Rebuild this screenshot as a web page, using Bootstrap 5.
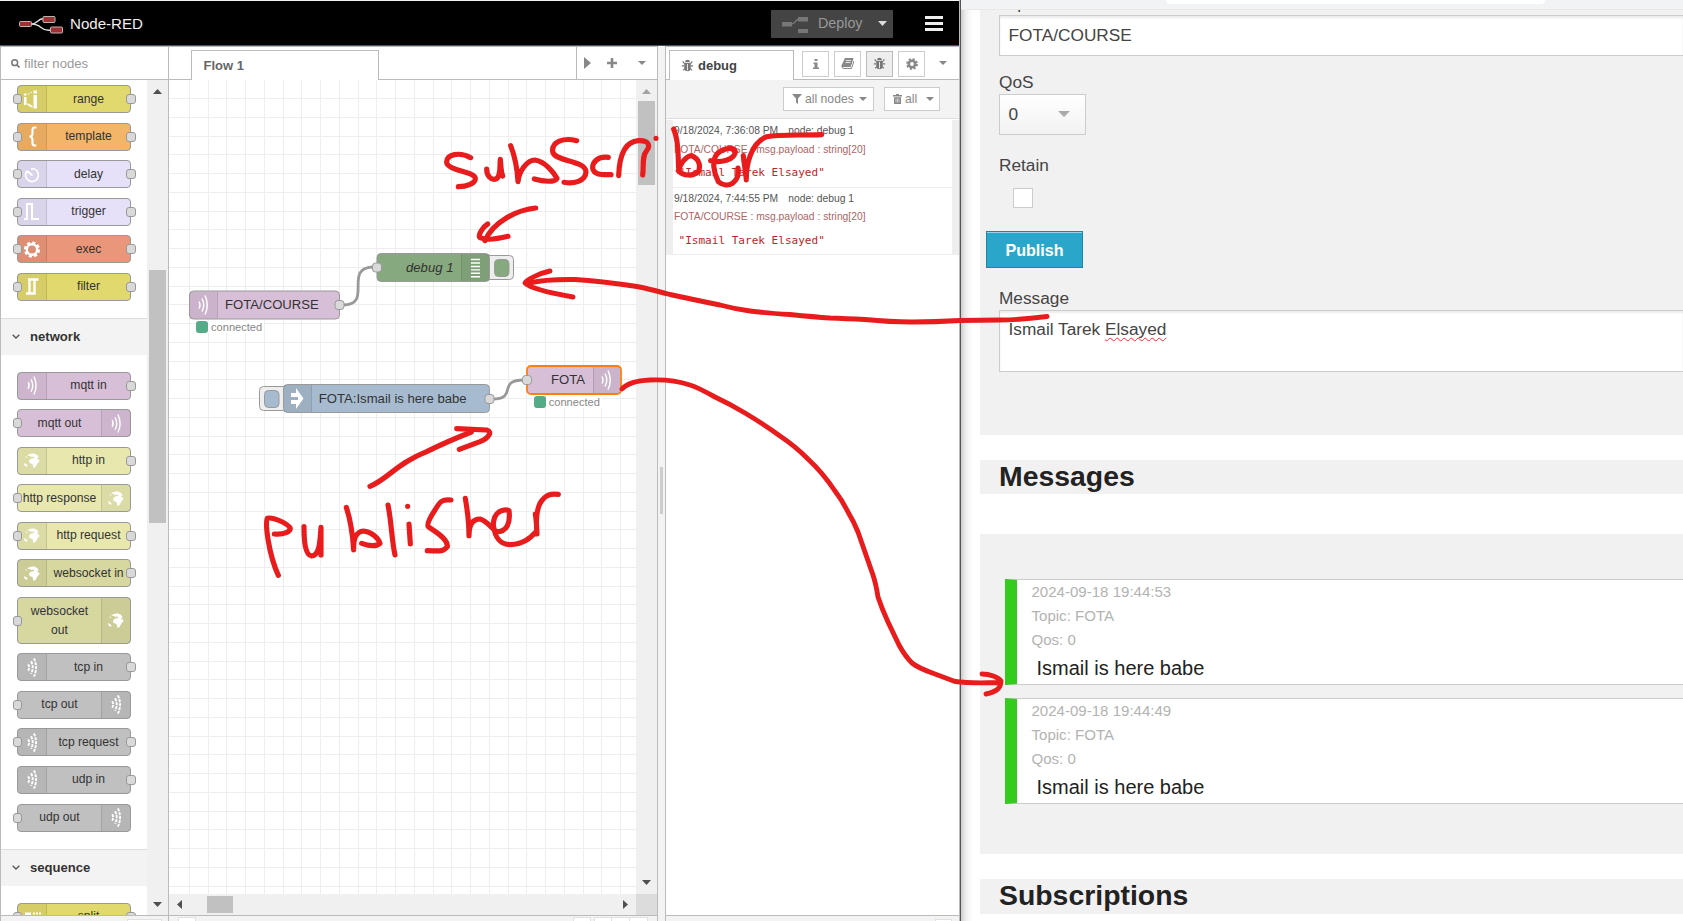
<!DOCTYPE html>
<html lang="en">
<head>
<meta charset="utf-8">
<title>Node-RED</title>
<link href="https://cdn.jsdelivr.net/npm/bootstrap@5.3.0/dist/css/bootstrap.min.css" rel="stylesheet">
<style>
body{width:1683px;height:921px;overflow:hidden;background:#fff;font-family:"Liberation Sans",Arial,sans-serif;color:#333;line-height:1.2}
.desk{width:1683px;height:921px}
.editor{width:960px;border-right:1px solid #bbb;background:#fff}
.strip{height:1px;background:#eef3f7}
.topbar{height:45px;background:#000;border-bottom:1px solid #b52a20;padding-left:19px;padding-right:16px;color:#eee}
.brand{font-size:15.1px;margin-left:7px;padding-top:2px;color:#eee}
.deploy{width:122px;height:28px;background:#444;color:#999;font-size:14.3px;padding-left:10px;margin-top:1px}
.work{height:875px}
.palette{width:169px;border-left:1px solid #bbb;border-right:1px solid #bbb}
.bar-row{height:34px;border-top:1px solid #bbb;border-bottom:1px solid #bbb}
.search{padding-left:10px;font-size:13.1px;color:#999}
.scroll-area{height:835px;overflow:hidden}
.nodes{width:146px;overflow:hidden;padding-top:5px}
.vbar{background:#f0f0f0;width:21px}
.thumb{background:#c1c1c1}
.pnode{width:114px;height:28px;border:1px solid #999;border-radius:4px;margin:0 0 9.55px 16px;font-size:12.15px;color:#333;display:flex;position:relative}
.pnode.tall{height:47px;margin-bottom:9.3px}
.picon{width:29px;background:rgba(0,0,0,.05);border-right:1px solid rgba(0,0,0,.1);display:flex;align-items:center;justify-content:center;flex:none}
.out .picon{order:2;border-right:0;border-left:1px solid rgba(0,0,0,.1)}
.plabel{flex:1;text-align:center;display:flex;align-items:center;justify-content:center;line-height:19px;white-space:nowrap}
.port{position:absolute;width:9px;height:10px;border:1px solid #999;border-radius:3px;background:#d9d9d9;top:50%;margin-top:-5px}
.port.l{left:-5px}.port.r{right:-6px;width:10px}
.cat{height:37px;background:#f3f3f3;border-top:1px solid #ddd;font-weight:bold;font-size:13.1px;padding-left:11px;color:#333}
.foot{height:6px;background:#f3f3f3;border-top:1px solid #bbb}
.flowcol{width:489px;border-right:1px solid #bbb}
.tabx{align-self:flex-end;height:30px;border:1px solid #bbb;border-bottom:0;background:#fff;margin-bottom:-1px;font-weight:bold;font-size:13px;color:#666}
.split{width:7px;background:#f3f3f3}
.side{width:294px;border-left:1px solid #bbb}
.ibtn{width:27px;height:26px;border:1px solid #ccc;background:#fff;margin-right:5px;margin-top:1px}
.dbtn{height:24px;border:1px solid #ccc;background:#fff;font-size:12.2px;color:#888;padding:0 6px 0 8px}
.dtools{height:39px;background:#f3f3f3;border-bottom:1px solid #ddd;padding-right:19px}
.dmsg{border-left:7px solid #eee;border-right:7px solid #eee;border-bottom:1px solid #eee;font-size:10.3px;padding-left:1px;height:67px;color:#555}
.dmsg code{font-family:"DejaVu Sans Mono",monospace;font-size:11.05px;color:#b72828;padding-left:4.500px}
.web{width:723px;background:#fff;color:#444;font-size:17.25px;border-left:1px solid #555}
.webin{padding-left:19px;background:linear-gradient(90deg,#ccc 0,#eaeaea 4px,#f8f8f8 8px,#fff 13px)}
.chrome{height:10px;background:#f1f3f5;border-bottom:1px solid #e6e8ea}
.omni{width:379px;height:4px;background:#fff;border-radius:0 0 8px 8px;margin-left:205px}
.panelx{background:#f1f1f1;padding-left:19px}
.fld{background:#fff;border:1px solid #ccc;border-right:0;box-shadow:inset 0 2px 2px rgba(0,0,0,.08);padding-left:8.500px;color:#444}
.sel{width:87px;height:41px;border:1px solid #ccc;background:linear-gradient(#fff,#f2f2f2);padding:0 15px 0 8.500px}
.pub{width:97px;height:37px;background:#2ba6cb;border:1px solid #1e85a4;box-shadow:inset 0 1px 0 rgba(255,255,255,.5);color:#fff;font-weight:bold;font-size:16.100px;margin-left:-13px;padding-top:2px}
.hd{height:34px;font-size:28.4px;font-weight:bold;color:#222;line-height:33px;white-space:nowrap}
.item{height:106px;margin-left:6px;border:1px solid #ccc;border-right:0;border-left:12px solid #33cc1c;background:#fff;padding-left:14.500px;color:#b3b3b3;font-size:15.05px}
.item div{height:24px;line-height:24px}
.item .body-t{font-size:20px;color:#222;padding-left:5px;height:32px;line-height:32px}
.sq{text-decoration:underline wavy #e33 1px;text-underline-offset:2px;text-decoration-skip-ink:none}
.ink{position:absolute;left:0;top:0;pointer-events:none}
svg{flex:none}
</style>
<script src="https://cdn.jsdelivr.net/npm/bootstrap@5.3.0/dist/js/bootstrap.bundle.min.js"></script>
</head>
<body>
<svg width="0" height="0" class="position-absolute">
<defs>
<symbol id="i-range" viewBox="0 0 20 20"><g fill="#fff"><path d="M2 4h2.500v2H2zM2 7.500h2.500v8H2zM11.500 1h3.500v3h-3.500zM11.500 5.500h3.500v13.500h-3.500zM6 4h1.500v1H6zM8.500 2.500h1.500v1h-1.500zM5.500 13.500l5 3v2l-5-3z"/></g></symbol>
<symbol id="i-template" viewBox="0 0 20 22"><path d="M14.500 1.500h-1.500Q10.500 1.500 10.500 4v4q0 2.500-3 3q3 .5 3 3v4q0 2.500 2.500 2.500H14.500" fill="none" stroke="#fff" stroke-width="2.200"/></symbol>
<symbol id="i-delay" viewBox="0 0 20 20"><path d="M10 4a6.500 6.500 0 1 1-4.900 2.200M10 3.500V5.500M10.500 11L5 6.500" fill="none" stroke="#fff" stroke-width="1.700"/></symbol>
<symbol id="i-trigger" viewBox="0 0 20 20"><path d="M2 17.500H5V2.500H10V17.500H17" fill="none" stroke="#fff" stroke-width="2"/></symbol>
<symbol id="i-exec" viewBox="0 0 20 20"><circle cx="10" cy="10" r="5.200" fill="none" stroke="#fff" stroke-width="2.400"/><circle cx="10" cy="10" r="6.900" fill="none" stroke="#fff" stroke-width="2.400" stroke-dasharray="3.200 2.219"/></symbol>
<symbol id="i-filter" viewBox="0 0 20 20"><path d="M4 17H7.500V3M6 3H16.500M12.500 3V17H6" fill="none" stroke="#fff" stroke-width="2.400"/></symbol>
<symbol id="i-wave" viewBox="0 0 14 22"><path d="M3 7.500Q5 11 3 14.500M6 4.500Q9.500 11 6 17.500M9 1.500Q13.500 11 9 20.500" fill="none" stroke="#fff" stroke-width="1.500"/></symbol>
<symbol id="i-bridge" viewBox="0 0 14 22"><path d="M3 7.500Q5 11 3 14.500M6 4.500Q9.500 11 6 17.500M9 1.500Q13.500 11 9 20.500" fill="none" stroke="#fff" stroke-width="2" stroke-dasharray="3.200 1"/></symbol>
<symbol id="i-globe" viewBox="0 0 20 20"><path d="M5 5Q8 2.500 12 3Q16 4 16.500 7L14.500 8.500L17 9L17.500 11L16 12L13.500 16.500L11.500 17.500L10.500 13.500L7.500 12.500L7 10L9 8L12.500 7.500L11.500 6L9.500 6.500L8 5.500ZM3 6L5.500 6.500L4.500 7.500ZM2 12.500L5.500 14.500L5 16.500L2.500 15Z" fill="#fff"/></symbol>
<symbol id="i-split" viewBox="0 0 20 20"><path d="M3 6h6v8H3zM11 6h2v2h-2zM14 6h2v2h-2zM17 6h2v2h-2z" fill="#fff"/></symbol>
<symbol id="i-bug" viewBox="0 0 16 16"><path d="M5 4a3 3 0 0 1 6 0zM4 5h8v6a4 4 0 0 1-8 0z" fill="#777"/><path d="M8 6v8" stroke="#fff" stroke-width="1"/><path d="M2 3l2.500 3M14 3l-2.500 3M1 8.500h3M15 8.500h-3M2.500 14L5 11.500M13.500 14L11 11.500" stroke="#777" stroke-width="1.400"/></symbol>
</defs>
</svg>
<div class="desk d-flex position-relative">
<div class="editor d-flex flex-column flex-shrink-0">
 <div class="strip"></div>
 <header class="topbar d-flex align-items-center">
  <svg width="44" height="18" viewBox="0 0 44 18" style="margin-top:3px"><path d="M12 8Q16 8 19 5T26 3M12 8Q18 8 22 11.500T32 14" fill="none" stroke="#ddd" stroke-width="1.400"/><g fill="#a03034" stroke="#c4b0b0" stroke-width="1"><rect x=".5" y="5.500" width="12" height="5" rx="1"/><rect x="24" y=".5" width="12" height="6" rx="1"/><rect x="31.500" y="11" width="12" height="6" rx="1"/></g></svg>
  <span class="brand">Node-RED</span>
  <div class="deploy d-flex align-items-center ms-auto"><svg width="28" height="18" viewBox="0 0 28 18"><path d="M1 7h10v4.500H1zM17 2h10v4.500H17zM17 14h10v4.500H17z" fill="#777"/><path d="M10 9Q13 9 14 7T18 4" stroke="#777" fill="none" stroke-width="1.500"/></svg><span style="margin-left:9px">Deploy</span><svg width="9" height="5" class="ms-auto" viewBox="0 0 9 5" style="margin-right:6px"><path d="M0 0h9L4.500 5z" fill="#ddd"/></svg></div>
  <svg width="18" height="15" viewBox="0 0 18 15" style="margin-left:32px"><path d="M0 1.500h18M0 7.500h18M0 13.500h18" stroke="#eee" stroke-width="2.800"/></svg>
 </header>
 <div class="work d-flex">
  <section class="palette d-flex flex-column flex-shrink-0">
   <div class="bar-row search d-flex align-items-center"><svg width="9" height="9" viewBox="0 0 9 9"><circle cx="3.700" cy="3.700" r="2.900" fill="none" stroke="#777" stroke-width="1.500"/><path d="M6 6L8.500 8.500" stroke="#777" stroke-width="1.700"/></svg><span class="ms-1" style="padding-top:1px">filter nodes</span></div>
   <div class="scroll-area d-flex">
    <div class="nodes" id="nodes"></div>
    <div class="vbar d-flex flex-column align-items-center">
     <svg width="9" height="5" viewBox="0 0 9 5" style="margin-top:9px"><path d="M0 5h9L4.500 0z" fill="#505050"/></svg>
     <div class="thumb" style="width:17px;height:253px;margin-top:176px"></div>
     <svg width="9" height="5" viewBox="0 0 9 5" class="mt-auto" style="margin-bottom:8px"><path d="M0 0h9L4.500 5z" fill="#505050"/></svg>
    </div>
   </div>
   <div class="foot d-flex"><div class="border bg-white" style="width:35px;height:8px;margin:3px 0 0 126px"></div></div>
  </section>
  <section class="flowcol d-flex flex-column flex-shrink-0">
   <div class="bar-row d-flex">
    <div class="tabx d-flex align-items-center" style="width:188px;margin-left:22px;padding-left:11.500px">Flow 1</div>
    <div class="ms-auto d-flex align-items-center" style="width:81px;border-left:1px solid #bbb;padding-left:7px">
     <svg width="7" height="12" viewBox="0 0 7 12"><path d="M0 0v12L7 6z" fill="#888"/></svg>
     <svg width="10" height="10" viewBox="0 0 10 10" style="margin-left:16px"><path d="M5 0v10M0 5h10" stroke="#888" stroke-width="2.600"/></svg>
     <svg width="8" height="4" viewBox="0 0 8 4" style="margin-left:21px"><path d="M0 0h8L4 4z" fill="#888"/></svg>
    </div>
   </div>
   <div class="d-flex" style="height:814px">
    <svg id="flow" width="467" height="814" viewBox="169 80 467 814">
     <g id="grid" fill="#eee"></g>
     <g fill="none" stroke="#999" stroke-width="2.800"><path d="M343 305C374 305 342 267 374 267M492 399C519 399 496 380 524 380"/></g>
     <g stroke="#999" stroke-width="1"><rect x="485" y="255.500" width="28.500" height="24" rx="4" fill="#eee"/><rect x="494.500" y="259.500" width="14.500" height="17" rx="4" fill="#87a980"/><rect x="259.500" y="386.500" width="28" height="24" rx="4" fill="#eee"/><rect x="264.500" y="390.500" width="14.500" height="17" rx="4" fill="#a6bbcf"/>
     <rect x="189.500" y="291" width="150" height="28" rx="4" fill="#d8bfd8"/><rect x="377" y="253.500" width="112.500" height="28" rx="4" fill="#87a980"/><rect x="283.500" y="384.500" width="206" height="28" rx="4" fill="#a6bbcf"/><rect x="527" y="366" width="94" height="28" rx="4" fill="#d8bfd8" stroke="#ff7f0e" stroke-width="1.800"/></g>
     <path d="M190 292h27.500v26.500H190zM461.500 254h27.500v27H461.500zM284 385h27.500v27H284zM593 367h27v26H593z" fill="#000" fill-opacity=".06"/>
     <path d="M217.500 292v26M461.500 254v27M311.500 385v27M593.500 367v26" stroke="#000" stroke-opacity=".12"/>
     <use href="#i-wave" x="196" y="294" width="14" height="22"/><use href="#i-wave" x="599" y="369" width="14" height="22"/>
     <path d="M471 259.500h9M471 263h9M471 266.500h9M471 269.900h9M471 273.300h9M471 276.700h9" stroke="#fff" stroke-width="1.400"/>
     <path d="M291 393h5v-5l7.500 10.500l-7.500 10.500v-5h-5v-4h7v-3h-7z" fill="#fff"/>
     <g fill="#d9d9d9" stroke="#999"><rect x="335" y="300.500" width="9" height="9" rx="3"/><rect x="372.500" y="263" width="9" height="9" rx="3"/><rect x="485" y="394.500" width="9" height="9" rx="3"/><rect x="522.500" y="375.500" width="9" height="9" rx="3"/></g>
     <path d="M208 321h56v12h-56zM546 396h56v12h-56z" fill="#fff"/>
     <g fill="#5a8"><rect x="196" y="321" width="12" height="12" rx="3"/><rect x="534" y="396" width="12" height="12" rx="3"/></g>
     <g fill="#333" font-size="13.130"><text x="225" y="309">FOTA/COURSE</text><text x="406" y="272" font-style="italic">debug 1</text><text x="318.800" y="403">FOTA:Ismail is here babe</text><text x="551" y="384">FOTA</text></g>
     <g fill="#888" font-size="11.100"><text x="211" y="331">connected</text><text x="548.700" y="406">connected</text></g>
    </svg>
    <div class="vbar d-flex flex-column align-items-center"><svg width="9" height="5" viewBox="0 0 9 5" style="margin-top:9px"><path d="M0 5h9L4.500 0z" fill="#a3a3a3"/></svg><div class="thumb" style="width:17px;height:84px;margin-top:7px"></div><svg width="9" height="5" viewBox="0 0 9 5" class="mt-auto" style="margin-bottom:9px"><path d="M0 0h9L4.500 5z" fill="#505050"/></svg></div>
   </div>
   <div class="d-flex align-items-center" style="height:21px;background:#f0f0f0"><svg width="5" height="9" viewBox="0 0 5 9" style="margin-left:8px"><path d="M5 0v9L0 4.500z" fill="#505050"/></svg><div class="thumb" style="width:26px;height:17px;margin-left:25px"></div><svg width="5" height="9" viewBox="0 0 5 9" class="ms-auto" style="margin-right:8px"><path d="M0 0v9L5 4.500z" fill="#505050"/></svg><div style="width:21px;height:21px;background:#dcdcdc"></div></div>
   <div class="foot d-flex"><div class="border bg-white" style="width:18px;height:8px;margin:1px 0 0 9px"></div><div class="border bg-white ms-auto" style="width:18px;height:8px;margin-top:1px"></div><div class="border bg-white d-flex" style="width:54px;height:8px;margin:1px 9px 0 3px"><div class="border-end" style="width:17px"></div><div class="border-end" style="width:18px"></div></div></div>
  </section>
  <div class="split d-flex align-items-center justify-content-center flex-shrink-0"><div style="width:3px;height:47px;background:#ccc;margin-top:14px"></div></div>
  <section class="side d-flex flex-column flex-shrink-0">
   <div class="bar-row d-flex">
    <div class="tabx d-flex align-items-center" style="width:125px;margin-left:3px;padding-left:11px;color:#444"><svg width="13" height="13"><use href="#i-bug"/></svg><span style="margin-left:4px">debug</span></div>
    <div class="d-flex align-items-center" style="margin-left:8px">
     <div class="ibtn d-flex align-items-center justify-content-center"><svg width="6" height="10" viewBox="0 0 6 10"><path d="M1.500 0h3v2h-3zM.5 3.500h4v5H6V10H0V8.500h1.500V5h-1z" fill="#888"/></svg></div>
     <div class="ibtn d-flex align-items-center justify-content-center"><svg width="13" height="11" viewBox="0 0 13 11"><path d="M4 0h8.500L10 9H1.500Q0 9 .5 7.500z" fill="#888"/><path d="M5 2.500h5M4.500 4.500h5M2 9.500h8L12.500 3" stroke="#fff" stroke-width=".8" fill="none"/><path d="M1 8.500Q1 10.500 3 10.500H10.500L13 3" stroke="#888" fill="none"/></svg></div>
     <div class="ibtn d-flex align-items-center justify-content-center" style="background:#eee;border-color:#bbb"><svg width="13" height="13"><use href="#i-bug"/></svg></div>
     <div class="ibtn d-flex align-items-center justify-content-center"><svg width="12" height="12" viewBox="0 0 12 12"><circle cx="6" cy="6" r="3.200" fill="none" stroke="#888" stroke-width="2.600"/><circle cx="6" cy="6" r="5" fill="none" stroke="#888" stroke-width="1.800" stroke-dasharray="2.100 1.830"/></svg></div>
     <svg width="8" height="4" viewBox="0 0 8 4" style="margin-left:9px"><path d="M0 0h8L4 4z" fill="#888"/></svg>
    </div>
   </div>
   <div class="dtools d-flex align-items-center justify-content-end">
    <div class="dbtn d-flex align-items-center" style="width:91px"><svg width="10" height="10" viewBox="0 0 10 10"><path d="M0 0h10L6 4.500V10L4 8.500V4.500z" fill="#888"/></svg><span style="margin-left:3px">all nodes</span><svg class="ms-auto" width="8" height="4" viewBox="0 0 8 4"><path d="M0 0h8L4 4z" fill="#888"/></svg></div>
    <div class="dbtn d-flex align-items-center" style="width:56px;margin-left:10px;padding-right:5px"><svg width="9" height="10" viewBox="0 0 9 10"><path d="M0 1h3V0h3v1h3v1.500H0zM1 3.300h7V10H1z" fill="#888"/><path d="M3 4.500v4M4.500 4.500v4M6 4.500v4" stroke="#fff" stroke-width=".6"/></svg><span style="margin-left:3px">all</span><svg class="ms-auto" width="8" height="4" viewBox="0 0 8 4"><path d="M0 0h8L4 4z" fill="#888"/></svg></div>
   </div>
   <div style="padding-top:1px;height:796px">
    <div class="dmsg" style="height:68px;padding-top:5px"><div>9/18/2024, 7:36:08 PM<span style="margin-left:10px">node: debug 1</span></div><div style="color:#a66;margin-top:7px">FOTA/COURSE : msg.payload : string[20]</div><div style="margin-top:9px"><code>"Ismail Tarek Elsayed"</code></div></div>
    <div class="dmsg" style="padding-top:5px"><div>9/18/2024, 7:44:55 PM<span style="margin-left:10px">node: debug 1</span></div><div style="color:#a66;margin-top:6px">FOTA/COURSE : msg.payload : string[20]</div><div style="margin-top:10px"><code>"Ismail Tarek Elsayed"</code></div></div>
   </div>
   <div class="foot"><div class="border bg-white ms-auto" style="width:17px;height:8px;margin:3px 7px 0 auto"></div></div>
  </section>
 </div>
</div>
<main class="web flex-shrink-0">
 <div class="chrome"><div class="omni"></div></div>
 <div class="webin">
  <div class="panelx" style="height:425px">
   <div style="height:5px;overflow:hidden;line-height:20px"><div style="margin-top:-17px">Topic</div></div>
   <div class="fld d-flex align-items-center" style="height:41px">FOTA/COURSE</div>
   <div style="margin-top:16px;height:22px;line-height:20px">QoS</div>
   <div class="sel d-flex align-items-center justify-content-between"><span>0</span><svg width="12" height="6" viewBox="0 0 12 6" style="margin-top:-1px"><path d="M0 0h12L6 6z" fill="#aaa"/></svg></div>
   <div style="margin-top:20px;height:19px;line-height:20px">Retain</div>
   <div class="bg-white" style="width:20px;height:20px;border:1px solid #ccc;margin:14px 0 0 14px"></div>
   <div class="pub d-flex align-items-center justify-content-center" style="margin-top:23px">Publish</div>
   <div style="margin-top:20px;height:22px;line-height:20px">Message</div>
   <div class="fld" style="height:62px;padding-top:8px"><span>Ismail Tarek <span class="sq">Elsayed</span></span></div>
  </div>
  <div style="height:25px"></div>
  <div class="panelx hd">Messages</div>
  <div style="height:40px"></div>
  <div class="panelx" style="height:320px;padding-top:45px">
   <div class="item"><div>2024-09-18 19:44:53</div><div>Topic: FOTA</div><div>Qos: 0</div><div class="body-t">Ismail is here babe</div></div>
   <div class="item" style="margin-top:13px"><div>2024-09-18 19:44:49</div><div>Topic: FOTA</div><div>Qos: 0</div><div class="body-t">Ismail is here babe</div></div>
  </div>
  <div style="height:25px"></div>
  <div class="panelx hd" style="height:35px">Subscriptions</div>
  <div style="height:7px"></div>
 </div>
</main>
<!-- freehand pen layer -->
<svg class="ink" width="1683" height="921" viewBox="0 0 1683 921" fill="none" stroke="#e81c1c" stroke-linecap="round" stroke-linejoin="round" stroke-width="4.900">
 <g transform="translate(420 0) scale(.33333)" stroke-width="15.500"><path d="M152 473C120 455 78 462 80 487C82 512 165 515 166 535C167 550 140 560 115 560M200 507C200 530 215 540 225 538C245 532 238 500 241 478C243 500 243 515 248 528M272 437C285 470 292 510 294 545C297 515 320 480 345 480C375 485 400 515 411 535C405 548 370 545 343 537M470 422C430 412 395 425 398 455C402 485 495 480 498 515C497 545 460 552 432 547M565 472C535 468 517 485 518 505C522 527 550 524 573 524M596 527C598 470 612 425 655 422C690 420 690 440 680 452C665 468 672 500 668 525M708 415v.1M347 624C290 630 220 665 195 722M203 672C190 680 172 705 180 713C200 722 240 715 264 709"/></g>
 <g transform="translate(640 0) scale(.33333)" stroke-width="15.500"><path d="M101 387C120 430 112 480 117 515C118 490 140 468 155 467C180 478 182 500 175 515C160 530 130 528 115 512M212 482C240 490 285 480 286 455C280 438 250 446 235 458C212 480 222 520 235 545C265 570 300 545 294 504M310 467C312 490 318 520 319 540C318 500 330 430 380 410C420 402 480 407 545 404"/></g>
 <g transform="translate(240 400) scale(.33333)" stroke-width="15.500"><path d="M103 402C130 405 155 395 150 383C140 370 100 350 82 355C75 370 85 460 115 526M192 380C192 420 195 465 215 468C240 465 240 420 243 382L243 465M319 322C330 355 338 400 341 450C340 410 350 395 370 393C395 395 415 415 420 430C410 440 385 437 365 430M444 315C455 370 455 420 465 465M507 372L511 432M503 319v.1M633 300C605 297 600 305 585 330C565 360 560 375 565 380C580 392 625 415 622 440C610 458 590 452 562 452M676 295C682 330 687 370 687 407C687 370 700 357 720 357C740 362 755 385 770 395C800 395 812 370 807 332C790 325 760 335 760 375C765 415 780 433 810 434C850 433 870 415 888 395M886 342C890 365 890 385 891 402C888 370 890 330 900 310C915 285 930 280 955 283M390 259C440 240 470 190 560 155Q620 125 694 96M650 86L740 90C760 95 745 115 720 125L658 148"/></g>
 <path d="M550 271C540 273 526 280 525 283C530 288 550 293 573 297M530 283C545 279 560 279.500 575 279.500Q600 281 637 286.500Q645 288 670 294.500Q700 301 720 305Q735 309 750 311Q765 313 790 314.500Q815 317 830 318Q845 318.500 865 319.500Q890 322 912 322Q935 322 960 320.500L1000 320Q1020 320 1047 316.500M622 389Q629 381 650 380Q672 379 690 385Q697 387 715 397Q730 404 745 413Q765 425 780 436Q795 446 808 459Q823 473 835 491Q842 500 848 512Q854 522 858 532L866 555L873 575Q876 584 878 597Q882 609 888 622L899 645Q905 656 912 663Q918 668 935 674L955 681.500Q970 683.500 998 682.500M982 674C990 674 998 677 1001 681C1001 690 994 692 986 694"/>
</svg>
</div>
<script>
const Y='#e2d96e',G='#c0c0c0',P='#d8bfd8',H='#e7e7ae',W='#d7d7a0';
const rows=[['range',Y,'range',3],['template','#f3b567','template',3],['delay','#e6e0f8','delay',3],['trigger','#e6e0f8','trigger',3],['exec','#e9967a','exec',3],['filter',Y,'filter',3],
['#network',17],['mqtt in',P,'wave',2],['mqtt out',P,'wave',1,1],['http in',H,'globe',2],['http response',H,'globe',1,1],['http request',H,'globe',3],['websocket in',W,'globe',2],['websocket<br>out',W,'globe',1,1],['tcp in',G,'bridge',2],['tcp out',G,'bridge',1,1],['tcp request',G,'bridge',3],['udp in',G,'bridge',2],['udp out',G,'bridge',1,1],
['#sequence',17]];
rows.push(['split',Y,'split',3]);
document.getElementById('nodes').innerHTML=rows.map(r=>{
 if(r[0][0]==='#')return `<div class="cat d-flex align-items-center" style="margin:17px 0 ${r[1]}px"><svg width="8" height="5" viewBox="0 0 8 5"><path d="M.7 .7L4 4L7.300 .7" fill="none" stroke="#555" stroke-width="1.300"/></svg><span style="margin-left:10px">${r[0].slice(1)}</span></div>`;
 return `<div class="pnode ${r[4]?'out':''} ${r[0].includes('<')?'tall':''}" style="background:${r[1]}"><div class="picon"><svg width="20" height="21"><use href="#i-${r[2]}"/></svg></div><div class="plabel">${r[0]}</div>${r[3]&1?'<i class="port l"></i>':''}${r[3]&2?'<i class="port r"></i>':''}</div>`}).join('');
let g='';
for(let x=189.33;x<636;x+=18.75)g+=`<rect x="${Math.floor(x)}" y="80" width="1" height="814"/>`;
for(let y=98.6;y<894;y+=18.75)g+=`<rect x="169" y="${Math.floor(y)}" width="467" height="1"/>`;
document.getElementById('grid').innerHTML=g;
</script>
</body>
</html>
